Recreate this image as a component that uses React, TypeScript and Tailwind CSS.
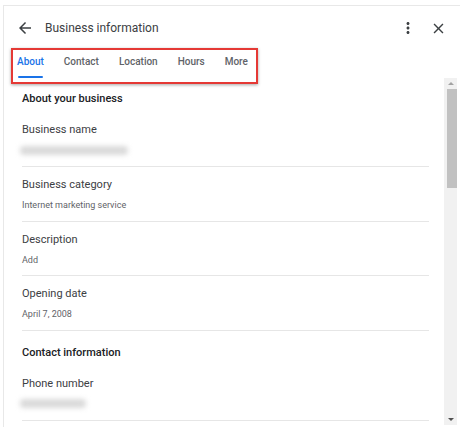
const font = { fontFamily: 'Roboto, "Liberation Sans", sans-serif' };

const tabs = ['About', 'Contact', 'Location', 'Hours', 'More'];

function Field({ label, value, blurWidth, first }: { label: string; value?: string; blurWidth?: number; first?: boolean }) {
  return (
    <div className={`ml-[18px] mr-[15px] border-b border-[#e6e6e6] ${first ? 'pb-[9px] pt-[15px]' : 'pb-[8.5px] pt-[10px]'}`}>
      <div className="text-[11px] leading-[16px] text-[#3c4043]">{label}</div>
      {value ? (
        <div className="mt-[5px] text-[9px] leading-[14px] text-[#5f6368]">{value}</div>
      ) : (
        <div className="mt-[5px] flex h-[14px] items-center">
          <div className="-ml-[2px] h-[9px] rounded-sm bg-[#dadada] blur-[2.5px]" style={{ width: blurWidth }} />
        </div>
      )}
    </div>
  );
}

export default function App() {
  return (
    <div className="relative h-[427px] w-[460px] overflow-hidden bg-white pl-[3px] pt-[5px]" style={font}>
      <div className="flex h-full flex-col border-l border-t border-[#e8e8e8]">
        {/* Header */}
        <div className="flex h-[44px] shrink-0 items-center">
          <svg className="ml-[12px] h-[18px] w-[18px] text-[#3c4043]" viewBox="0 0 24 24" fill="currentColor">
            <path d="M20 11H7.83l5.59-5.59L12 4l-8 8 8 8 1.41-1.41L7.83 13H20v-2z" />
          </svg>
          <span className="ml-[11px] text-[12px] text-[#3c4043]">Business information</span>
          <div className="flex-1" />
          <svg className="h-[18px] w-[18px] text-[#3c4043]" viewBox="0 0 24 24" fill="currentColor">
            <path d="M12 8c1.1 0 2-.9 2-2s-.9-2-2-2-2 .9-2 2 .9 2 2 2zm0 2c-1.1 0-2 .9-2 2s.9 2 2 2 2-.9 2-2-.9-2-2-2zm0 6c-1.1 0-2 .9-2 2s.9 2 2 2 2-.9 2-2-.9-2-2-2z" />
          </svg>
          <svg className="ml-[13px] mr-[13px] h-[17px] w-[17px] text-[#3c4043]" viewBox="0 0 24 24" fill="currentColor">
            <path d="M19 6.41L17.59 5 12 10.59 6.41 5 5 6.41 10.59 12 5 17.59 6.41 19 12 13.41 17.59 19 19 17.59 13.41 12z" />
          </svg>
        </div>

        {/* Tabs */}
        <div className="flex h-[28px] shrink-0 items-start gap-[20px] pl-[13px]">
          {tabs.map((t, i) => (
            <div key={t} className="flex flex-col items-center pt-[5px]">
              <span className={`text-[10px] font-medium leading-[14px] ${i === 0 ? 'text-[#1a73e8]' : 'text-[#5f6368]'}`}>{t}</span>
              {i === 0 && <div className="mt-[7px] h-[2px] w-[25px] rounded-full bg-[#1a73e8]" />}
            </div>
          ))}
        </div>

        {/* Body + scrollbar */}
        <div className="flex min-h-0 flex-1">
          <div className="flex-1">
            <div className="ml-[18px] pt-[13px] text-[11px] font-medium leading-[16px] text-[#202124]">About your business</div>
            <Field label="Business name" blurWidth={108} first />
            <Field label="Business category" value="Internet marketing service" />
            <Field label="Description" value="Add" />
            <Field label="Opening date" value="April 7, 2008" />
            <div className="ml-[18px] pt-[14px] text-[11px] font-medium leading-[16px] text-[#202124]">Contact information</div>
            <Field label="Phone number" blurWidth={66} first />
          </div>

          {/* Scrollbar */}
          <div className="mb-[2px] mr-[3px] flex w-[13px] flex-col items-center bg-[#f1f1f1]">
            <div className="flex h-[11px] w-full items-center justify-center">
              <div className="h-0 w-0 border-x-[3px] border-b-[3px] border-x-transparent border-b-[#a3a3a3]" />
            </div>
            <div className="ml-[2px] h-[99px] w-[10px] bg-[#c1c1c1]" />
            <div className="flex-1" />
            <div className="flex h-[11px] w-full items-center justify-center">
              <div className="h-0 w-0 border-x-[3px] border-t-[3px] border-x-transparent border-t-[#505050]" />
            </div>
          </div>
        </div>
      </div>

      {/* Annotation box */}
      <div className="absolute left-[11px] top-[48px] h-[36px] w-[247px] border-2 border-[#e53935] shadow-[0_1px_3px_rgba(0,0,0,0.35)]" />
    </div>
  );
}
